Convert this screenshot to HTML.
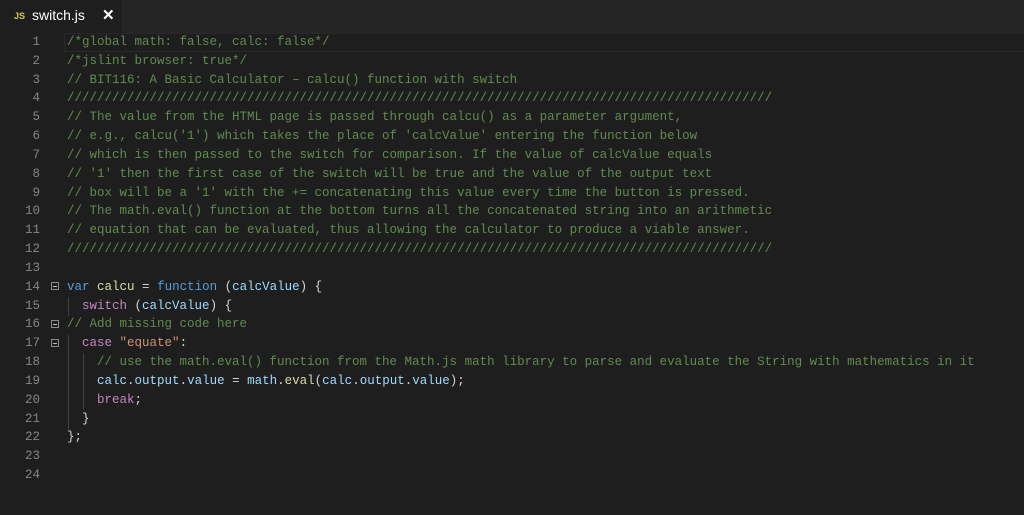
<!DOCTYPE html>
<html><head><style>
body{margin:0;width:1024px;height:515px;background:#1e1e1e;overflow:hidden;font-family:"Liberation Mono",monospace}
.bar{position:absolute;left:0;top:0;width:1024px;height:33px;background:#252526}
.tab{position:absolute;left:0;top:0;width:122px;height:33px;background:#1e1e1e;font-family:"Liberation Sans",sans-serif}
.tab .js{position:absolute;left:14px;top:11px;font-size:9px;font-weight:bold;color:#cbcb41}
.tab .nm{position:absolute;left:32px;top:7px;font-size:14px;color:#fff}
.tab .x{position:absolute;left:102px;top:6px;font-size:15px;font-weight:bold;color:#fff}
.cur{position:absolute;left:64px;top:33px;width:960px;height:17px;border:1px solid #282828;border-right:none}
.ln{position:absolute;left:0;width:40px;text-align:right;color:#858585;font-size:12.5px}
.code{position:absolute;left:67px;font-size:12.5px;color:#d4d4d4}
.l{height:18.83px;line-height:18.83px;white-space:pre}
.c{color:#608b4e}.k{color:#569cd6}.f{color:#dcdcaa}.v{color:#9cdcfe}.p{color:#c586c0}.s{color:#ce9178}
.fold{position:absolute;left:51px;width:8px;height:8px;border:1px solid #8a8a8a;box-sizing:border-box}
.fold:after{content:"";position:absolute;left:1px;top:3px;width:4px;height:1px;background:#bbb}
.g{position:absolute;width:1px;background:#404040}
</style></head><body>
<div class="bar"></div>
<div class="tab"><span class="js">JS</span><span class="nm">switch.js</span><span class="x">✕</span></div>
<div class="cur"></div>
<div class="ln" style="top:33px">
<div class="l">1</div><div class="l">2</div><div class="l">3</div><div class="l">4</div><div class="l">5</div><div class="l">6</div><div class="l">7</div><div class="l">8</div><div class="l">9</div><div class="l">10</div><div class="l">11</div><div class="l">12</div><div class="l">13</div><div class="l">14</div><div class="l">15</div><div class="l">16</div><div class="l">17</div><div class="l">18</div><div class="l">19</div><div class="l">20</div><div class="l">21</div><div class="l">22</div><div class="l">23</div><div class="l">24</div>
</div>
<div class="fold" style="top:282px"></div>
<div class="fold" style="top:320px"></div>
<div class="fold" style="top:339px"></div>
<div class="g" style="left:68px;top:297px;height:19px"></div>
<div class="g" style="left:68px;top:335px;height:94px"></div>
<div class="g" style="left:83px;top:353px;height:57px"></div>
<div class="code" style="top:33px"><div class="l c">/*global math: false, calc: false*/</div><div class="l c">/*jslint browser: true*/</div><div class="l c">// BIT116: A Basic Calculator – calcu() function with switch</div><div class="l c">//////////////////////////////////////////////////////////////////////////////////////////////</div><div class="l c">// The value from the HTML page is passed through calcu() as a parameter argument,</div><div class="l c">// e.g., calcu('1') which takes the place of 'calcValue' entering the function below</div><div class="l c">// which is then passed to the switch for comparison. If the value of calcValue equals</div><div class="l c">// '1' then the first case of the switch will be true and the value of the output text</div><div class="l c">// box will be a '1' with the += concatenating this value every time the button is pressed.</div><div class="l c">// The math.eval() function at the bottom turns all the concatenated string into an arithmetic</div><div class="l c">// equation that can be evaluated, thus allowing the calculator to produce a viable answer.</div><div class="l c">//////////////////////////////////////////////////////////////////////////////////////////////</div><div class="l"> </div><div class="l"><span class="k">var</span> <span class="f">calcu</span> = <span class="k">function</span> (<span class="v">calcValue</span>) {</div><div class="l">  <span class="p">switch</span> (<span class="v">calcValue</span>) {</div><div class="l c">// Add missing code here</div><div class="l">  <span class="p">case</span> <span class="s">"equate"</span>:</div><div class="l c">    // use the math.eval() function from the Math.js math library to parse and evaluate the String with mathematics in it</div><div class="l">    <span class="v">calc</span>.<span class="v">output</span>.<span class="v">value</span> = <span class="v">math</span>.<span class="f">eval</span>(<span class="v">calc</span>.<span class="v">output</span>.<span class="v">value</span>);</div><div class="l">    <span class="p">break</span>;</div><div class="l">  }</div><div class="l">};</div></div>
</body></html>
